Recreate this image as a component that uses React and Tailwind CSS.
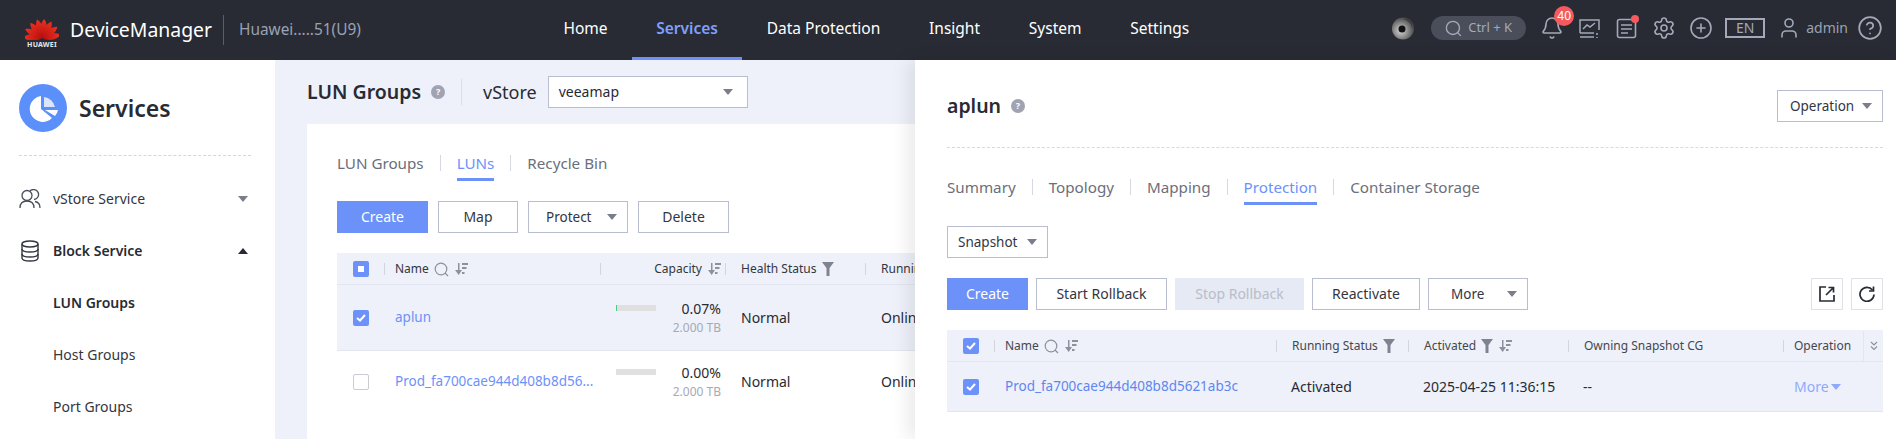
import { Bell, CirclePlus, CircleHelp, Settings, User } from 'lucide-react';

const font = { fontFamily: '"Noto Sans", sans-serif' };

const HuaweiLogo = () => {
  const angles = [-84, -58, -34, -11, 11, 34, 58, 84];
  return (
    <div className="flex w-[34px] flex-col items-center">
      <svg width="34" height="28" viewBox="0 0 34 28">
        <defs>
          <linearGradient id="petal" x1="0" y1="0" x2="0" y2="1">
            <stop offset="0" stopColor="#f0301f" />
            <stop offset="1" stopColor="#b30f10" />
          </linearGradient>
        </defs>
        {angles.map((a) => (
          <path
            key={a}
            d="M0 0 C-4.6 -6 -5 -13 -1.4 -19 C3 -15 4.6 -7 0 0 Z"
            fill="url(#petal)"
            transform={`translate(17 26) rotate(${a})`}
          />
        ))}
      </svg>
      <span className="mt-[1px] text-[7px] leading-[8px] font-bold tracking-[0.2px] text-[#e8e9ec]">HUAWEI</span>
    </div>
  );
};

const ServicesLogo = () => (
  <svg width="48" height="48" viewBox="0 0 48 48" className="shrink-0">
    <circle cx="24" cy="24" r="24" fill="#5b8ff9" />
    <path d="M22 12 A13 13 0 1 0 33 34 L22 25 Z" fill="#fff" />
    <path d="M25 13 A13 13 0 0 1 36 23 L25 23 Z" fill="#dbe6fd" />
    <path d="M26 26 L39 26 A13 13 0 0 1 36 32 Z" fill="#fff" />
  </svg>
);

const EyeIcon = () => (
  <svg width="22" height="23" viewBox="0 0 22 23" className="shrink-0">
    <defs>
      <radialGradient id="ball" cx="0.4" cy="0.6" r="0.6">
        <stop offset="0" stopColor="#d8d8d8" />
        <stop offset="1" stopColor="#4a4a4a" />
      </radialGradient>
    </defs>
    <circle cx="11" cy="11.5" r="11" fill="url(#ball)" />
    <path d="M11 2 A9.5 9.5 0 0 1 20 12 A8 8 0 0 0 11 2 Z" fill="#333" />
    <circle cx="10" cy="12" r="3.5" fill="#111" />
  </svg>
);

const Caret = ({ color = '#7a7e8a', up = false, className = '' }) => (
  <svg width="10" height="6" viewBox="0 0 10 6" className={`shrink-0 ${className}`}>
    <path d={up ? 'M5 0 L10 6 L0 6 Z' : 'M0 0 L10 0 L5 6 Z'} fill={color} />
  </svg>
);

const SearchIcon = ({ size = 15, color = '#8d919d' }) => (
  <svg width={size} height={size} viewBox="0 0 15 15" fill="none" stroke={color} strokeWidth="1.2" className="shrink-0">
    <circle cx="7" cy="7" r="5.8" />
    <path d="M11 11 L14 14" />
  </svg>
);

const SortIcon = () => (
  <svg width="15" height="14" viewBox="0 0 15 14" fill="#8d919d" className="shrink-0">
    <path d="M4 1 H5.5 V8 H8 L4.7 13 L1 8 H4 Z" />
    <rect x="8" y="1" width="6" height="2" />
    <rect x="8" y="5" width="4.5" height="2" />
    <rect x="8" y="10" width="2.5" height="2" />
  </svg>
);

const FilterIcon = () => (
  <svg width="12" height="14" viewBox="0 0 12 14" fill="#7f8390" className="shrink-0">
    <path d="M0 0 H12 L7.5 6 V14 H4.5 V6 Z" />
  </svg>
);

const HelpDot = ({ size = 14 }) => (
  <span
    className="flex shrink-0 items-center justify-center rounded-full bg-[#a0a4b2] font-bold text-white"
    style={{ width: size, height: size, fontSize: size - 5 }}
  >
    ?
  </span>
);

const Checkbox = ({ state }) => {
  if (state === 'none') {
    return <span className="block h-4 w-4 shrink-0 rounded-[2px] border border-[#c9ccd3] bg-white" />;
  }
  return (
    <span className="flex h-4 w-4 shrink-0 items-center justify-center rounded-[2px] bg-[#6c92fa]">
      {state === 'partial' ? (
        <span className="block h-[6px] w-[6px] bg-white" />
      ) : (
        <svg width="10" height="8" viewBox="0 0 10 8" fill="none" stroke="#fff" strokeWidth="2">
          <path d="M1 4 L4 6.5 L9 1" />
        </svg>
      )}
    </span>
  );
};

const Tabs = ({ items, active, className = '' }) => (
  <div className={`flex items-center ${className}`}>
    {items.map((item, i) => (
      <div key={item} className="flex items-center">
        {i > 0 && <span className="mx-4 h-4 w-px bg-[#d5d9e4]" />}
        <span
          className={`relative text-[15.2px] leading-[24px] ${item === active ? 'text-[#6c92fa]' : 'text-[#6b6f7b]'}`}
        >
          {item}
          {item === active && <span className="absolute top-[27px] right-0 left-0 h-[3px] bg-[#6c92fa]" />}
        </span>
      </div>
    ))}
  </div>
);

const Btn = ({ width, primary, disabled, children }) => (
  <button
    className={`flex h-8 shrink-0 items-center justify-center text-sm ${
      primary
        ? 'bg-[#6c92fa] text-white'
        : disabled
          ? 'bg-[#e6eaf4] text-[#b9bdc9]'
          : 'border border-[#b8bdcf] bg-white text-[#33363f]'
    } ${width}`}
  >
    {children}
  </button>
);

const DropBtn = ({ width, pad = 'pl-[10px]', children }) => (
  <button className={`flex h-8 shrink-0 items-center justify-between border border-[#b8bdcf] bg-white pr-[10px] text-[13.5px] text-[#33363f] ${pad} ${width}`}>
    {children}
    <Caret />
  </button>
);

// header cell with the little divider on its left
const HeadCell = ({ width, sep = true, right, children }) => (
  <div className={`flex h-full shrink-0 items-center ${width}`}>
    {sep && <span className="h-3 w-px shrink-0 bg-[#d3d6df]" />}
    <div className={`flex min-w-0 flex-1 items-center gap-[5px] whitespace-nowrap ${right ? 'justify-end pr-[3px]' : 'pl-[10px]'}`}>{children}</div>
  </div>
);

const Capacity = ({ pct, mark }) => (
  <div className="flex w-[125px] shrink-0 justify-end pr-1">
    <div className="flex w-[105px] items-start justify-between">
      <span className="mt-[6px] block h-[6px] w-10 bg-[#e0e0e0]">{mark && <span className="block h-full w-px bg-[#52c98a]" />}</span>
      <div className="text-right">
        <div className="text-sm leading-[20px] text-[#282b33]">{pct}</div>
        <div className="text-xs leading-[18px] text-[#a6aab5]">2.000 TB</div>
      </div>
    </div>
  </div>
);

const LunRow = ({ name, pct, mark, state, selected }) => (
  <div className={`flex items-center text-sm ${selected ? 'h-[66px] border-b border-[#e2e6f0] bg-[#eef1f9]' : 'h-[62px] bg-white'}`}>
    <div className="flex w-[58px] shrink-0 pl-4">
      <Checkbox state={state} />
    </div>
    <span className="w-[205px] shrink-0 text-[13.5px] whitespace-nowrap text-[#6c92fa]">{name}</span>
    <Capacity pct={pct} mark={mark} />
    <span className="w-[140px] shrink-0 pl-[16px] text-[#282b33]">Normal</span>
    <span className="pl-[16px] text-[#282b33]">Online</span>
  </div>
);

const App = () => {
  const nav = ['Home', 'Services', 'Data Protection', 'Insight', 'System', 'Settings'];
  return (
    <div className="flex h-screen flex-col overflow-hidden bg-white text-[#282b33]" style={font}>
      <header className="flex h-[60px] shrink-0 items-center bg-[#282b33]">
        <div className="flex w-[539px] shrink-0 items-center pl-[25px]">
          <HuaweiLogo />
          <span className="ml-[11px] text-[19.4px] leading-[28px] text-white">DeviceManager</span>
          <span className="mx-[11px] h-[30px] w-px bg-[#5a5e6a]" />
          <span className="ml-[4px] text-[15.4px] text-[#9aa2b4]">Huawei.....51(U9)</span>
        </div>
        <nav className="flex h-full items-stretch">
          {nav.map((n) => (
            <a
              key={n}
              className={`flex items-center border-b-[3px] px-[24.4px] text-[15.5px] ${
                n === 'Services' ? 'border-[#6c92fa] font-semibold text-[#7fa0fb]' : 'border-transparent text-white'
              }`}
            >
              {n}
            </a>
          ))}
        </nav>
        <div className="ml-auto flex items-center pr-[13px] pb-1 text-[#a3a9b8]">
          <EyeIcon />
          <div className="ml-[17px] flex h-6 w-[95px] items-center rounded-full bg-[#4a4e5a] pl-[14px] text-[13px] text-[#a3a9b8]">
            <SearchIcon size={17} color="#a3a9b8" />
            <span className="ml-[6px]">Ctrl + K</span>
          </div>
          <div className="relative ml-[14px]">
            <Bell size={24} strokeWidth={1.6} />
            <span className="absolute -top-[10px] left-[14px] flex h-5 w-5 items-center justify-center rounded-full bg-[#f45a5e] text-xs text-white">40</span>
          </div>
          <svg width="21" height="21" viewBox="0 0 21 21" fill="none" stroke="currentColor" strokeWidth="1.5" className="ml-[15px]">
            <path d="M1 15 V2 H20 V12" />
            <path d="M4 11 L8 7 L11 9 L16 5" />
            <path d="M1 15 H15 M1 19 H15" />
            <path d="M18 15 V17 M18 19 V20" />
          </svg>
          <div className="relative ml-[16px]">
            <svg width="21" height="21" viewBox="0 0 21 21" fill="none" stroke="currentColor" strokeWidth="1.6">
              <rect x="1.5" y="1.5" width="18" height="18" rx="2" />
              <path d="M5 7 H16 M5 11 H16 M5 15 H12" />
            </svg>
            <span className="absolute -top-[3px] -right-[2px] h-2 w-2 rounded-full bg-[#f45a5e]" />
          </div>
          <Settings size={24} strokeWidth={1.6} className="ml-[15px]" />
          <CirclePlus size={24} strokeWidth={1.6} className="ml-[13px]" />
          <span className="ml-[12px] flex h-5 w-10 items-center justify-center border-2 border-[#a3a9b8] text-sm">EN</span>
          <User size={24} strokeWidth={1.6} className="ml-[12px]" />
          <span className="ml-[5px] text-sm text-[#9aa2b4]">admin</span>
          <CircleHelp size={26} strokeWidth={1.6} className="ml-[9px]" />
        </div>
      </header>

      <div className="flex min-h-0 flex-1">
        <aside className="w-[275px] shrink-0 bg-white px-[19px] pt-6">
          <div className="flex items-center gap-3">
            <ServicesLogo />
            <span className="text-[23px] font-semibold">Services</span>
          </div>
          <div className="mt-[23px] w-[232px] border-t border-dashed border-[#d3d6df]" />
          <div className="mt-[17px] flex h-[52px] w-[229px] items-center text-sm text-[#33363f]">
            <svg width="22" height="20" viewBox="0 0 22 20" fill="none" stroke="#4a4e5a" strokeWidth="1.3" className="shrink-0">
              <circle cx="8" cy="6.5" r="5" />
              <path d="M11 2 A5 5 0 1 1 15 10.5" />
              <path d="M1 19 C1 14 4 12 8 12 C12 12 15 14 15 19" />
              <path d="M16 12.5 C19 13 21 15.5 21 19" />
            </svg>
            <span className="ml-3 flex-1">vStore Service</span>
            <Caret />
          </div>
          <div className="flex h-[52px] w-[229px] items-center text-sm font-semibold">
            <svg width="18" height="22" viewBox="0 0 18 22" fill="none" stroke="#33363f" strokeWidth="1.4" className="ml-[2px] shrink-0">
              <ellipse cx="9" cy="4" rx="8" ry="3" />
              <path d="M1 4 V18 C1 20 4 21 9 21 C14 21 17 20 17 18 V4" />
              <path d="M1 9 C1 11 4 12 9 12 C14 12 17 11 17 9" />
              <path d="M1 14 C1 16 4 17 9 17 C14 17 17 16 17 14" />
            </svg>
            <span className="ml-[14px] flex-1">Block Service</span>
            <Caret up color="#282b33" />
          </div>
          <div className="flex h-[52px] items-center pl-[34px] text-sm font-semibold">LUN Groups</div>
          <div className="flex h-[52px] items-center pl-[34px] text-sm text-[#33363f]">Host Groups</div>
          <div className="flex h-[52px] items-center pl-[34px] text-sm text-[#33363f]">Port Groups</div>
        </aside>

        <main className="flex min-w-0 flex-1 flex-col overflow-hidden bg-[#eef1f9] pl-8">
          <div className="flex h-16 shrink-0 items-center">
            <span className="text-[19.5px] font-semibold">LUN Groups</span>
            <span className="ml-[10px]"><HelpDot /></span>
            <span className="mx-4 h-[26px] w-px bg-[#dcdfe8]" />
            <span className="ml-[5px] text-lg">vStore</span>
            <div className="ml-[11px] flex h-8 w-[200px] items-center justify-between border border-[#b8bdcf] bg-white pr-[14px] pl-[10px] text-sm">
              veeamap
              <Caret />
            </div>
          </div>
          <div className="min-h-0 flex-1 bg-white pt-[27px] pl-[30px]">
            <Tabs items={['LUN Groups', 'LUNs', 'Recycle Bin']} active="LUNs" />
            <div className="mt-[26px] flex gap-[10px]">
              <Btn width="w-[91px]" primary>Create</Btn>
              <Btn width="w-[80px]">Map</Btn>
              <DropBtn width="w-[100px]" pad="pl-[17px]">Protect</DropBtn>
              <Btn width="w-[91px]">Delete</Btn>
            </div>
            <div className="mt-5 overflow-hidden">
              <div className="flex h-8 items-center border-b border-[#e2e6f0] bg-[#eef1f9] pt-px text-xs text-[#33363f]">
                <div className="flex w-[47px] shrink-0 pl-4">
                  <Checkbox state="partial" />
                </div>
                <HeadCell width="w-[216px]">
                  Name <SearchIcon /> <SortIcon />
                </HeadCell>
                <HeadCell width="w-[125px]" right>
                  Capacity <SortIcon />
                </HeadCell>
                <HeadCell width="w-[140px]">
                  <span className="pl-[5px]">Health Status</span> <FilterIcon />
                </HeadCell>
                <HeadCell width="w-[100px]">
                  <span className="pl-[5px]">Running</span>
                </HeadCell>
              </div>
              <LunRow name="aplun" pct="0.07%" mark state="checked" selected />
              <LunRow name="Prod_fa700cae944d408b8d56..." pct="0.00%" state="none" />
            </div>
          </div>
        </main>

        <section className="relative w-[981px] shrink-0 bg-white pt-[30px] pr-[13px] pl-8 shadow-[-8px_0_16px_rgba(0,0,0,0.08)]">
          <div className="flex h-8 items-center">
            <span className="text-[19.5px] font-semibold">aplun</span>
            <span className="ml-[10px]"><HelpDot /></span>
            <div className="ml-auto">
              <DropBtn width="w-[106px]" pad="pl-[12px]">Operation</DropBtn>
            </div>
          </div>
          <div className="mt-[25px] border-t border-dashed border-[#d3d9e6]" />
          <Tabs className="mt-[27px]" items={['Summary', 'Topology', 'Mapping', 'Protection', 'Container Storage']} active="Protection" />
          <div className="mt-[27px]">
            <DropBtn width="w-[101px]">Snapshot</DropBtn>
          </div>
          <div className="mt-5 flex gap-2">
            <Btn width="w-[81px]" primary>Create</Btn>
            <Btn width="w-[131px]">Start Rollback</Btn>
            <Btn width="w-[129px]" disabled>Stop Rollback</Btn>
            <Btn width="w-[108px]">Reactivate</Btn>
            <DropBtn width="w-[100px]" pad="pl-[22px]">More</DropBtn>
            <button className="ml-auto flex h-8 w-8 items-center justify-center border border-[#e0e2e8] bg-white">
              <svg width="16" height="16" viewBox="0 0 16 16" fill="none" stroke="#282b33" strokeWidth="1.7">
                <path d="M7 1 H1 V15 H15 V9" />
                <path d="M7 9 L14 2 M9.5 1.5 H14.5 V6.5" />
              </svg>
            </button>
            <button className="flex h-8 w-8 items-center justify-center border border-[#e0e2e8] bg-white">
              <svg width="16" height="16" viewBox="0 0 16 16" fill="none" stroke="#282b33" strokeWidth="1.7">
                <path d="M13.5 4 A7 7 0 1 0 15 8.5" />
                <path d="M14.5 0.5 V5 H10" />
              </svg>
            </button>
          </div>
          <div className="mt-5">
            <div className="flex h-8 items-center border-b border-[#e2e6f0] bg-[#eef1f9] pt-px text-xs text-[#44474f]">
              <div className="flex w-[47px] shrink-0 pl-4">
                <Checkbox state="checked" />
              </div>
              <HeadCell width="w-[282px]">
                Name <SearchIcon /> <SortIcon />
              </HeadCell>
              <HeadCell width="w-[132px]">
                <span className="pl-[5px]">Running Status</span> <FilterIcon />
              </HeadCell>
              <HeadCell width="w-[160px]">
                <span className="pl-[5px]">Activated</span> <FilterIcon /> <SortIcon />
              </HeadCell>
              <HeadCell width="w-[215px]">
                <span className="pl-[5px]">Owning Snapshot CG</span>
              </HeadCell>
              <HeadCell width="w-[80px]">Operation</HeadCell>
              <div className="flex h-full flex-1 items-center justify-center border-l border-[#e2e6f0]">
                <svg width="8" height="10" viewBox="0 0 8 10" fill="none" stroke="#8d919d" strokeWidth="1.2">
                  <path d="M1 1 L4 4 L7 1 M1 5.5 L4 8.5 L7 5.5" />
                </svg>
              </div>
            </div>
            <div className="flex h-[50px] items-center border-b border-[#e2e6f0] bg-[#eef1f9] text-sm">
              <div className="flex w-[58px] shrink-0 pl-4">
                <Checkbox state="checked" />
              </div>
              <span className="w-[286px] shrink-0 text-[13.5px] text-[#5f87f0]">Prod_fa700cae944d408b8d5621ab3c</span>
              <span className="w-[132px] shrink-0">Activated</span>
              <span className="w-[160px] shrink-0">2025-04-25 11:36:15</span>
              <span className="w-[211px] shrink-0">--</span>
              <span className="flex items-center gap-[2px] text-[#8eaaff]">
                More <Caret color="#8eaaff" />
              </span>
            </div>
          </div>
        </section>
      </div>
    </div>
  );
};

export default App;
